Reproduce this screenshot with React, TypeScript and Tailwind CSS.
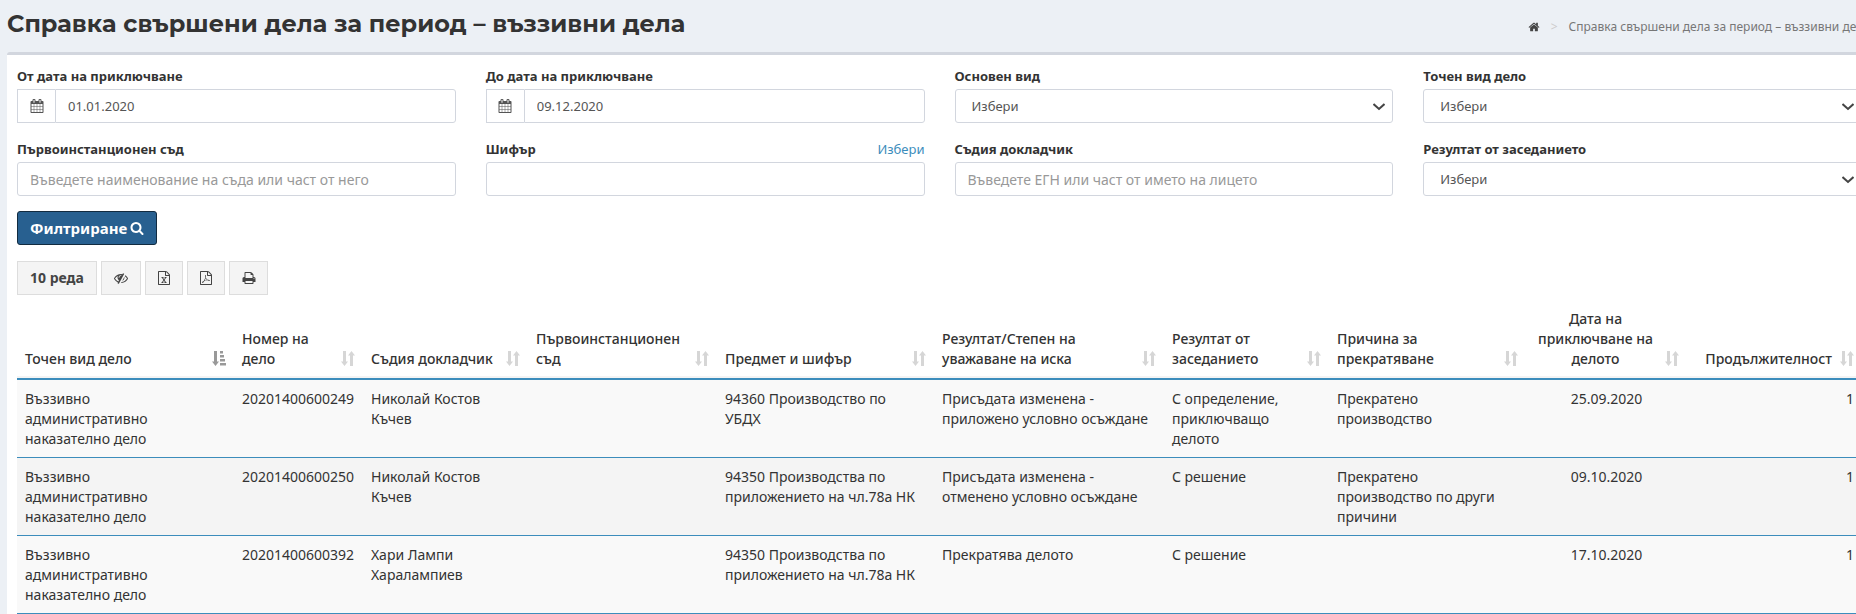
import React from "react";

const FILE =
  "M1596 380q28 28 48 76t20 88v1152q0 40-28 68t-68 28h-1344q-40 0-68-28t-28-68v-1600q0-40 28-68t68-28h896q40 0 88 20t76 48zm-444-244v376h376q-10-29-22-41l-313-313q-12-12-41-22zm384 1528v-1024h-416q-40 0-68-28t-28-68v-416h-768v1536h1280z";

const PATHS = {
  calendar:
    "M192 1664h288v-288h-288v288zm352 0h320v-288h-320v288zm-352-352h288v-320h-288v320zm352 0h320v-320h-320v320zm-352-384h288v-288h-288v288zm736 736h320v-288h-320v288zm-384-736h320v-288h-320v288zm768 736h288v-288h-288v288zm-384-352h320v-320h-320v320zm-352-864v-288q0-13-9.5-22.5t-22.5-9.5h-64q-13 0-22.5 9.5t-9.5 22.5v288q0 13 9.5 22.5t22.5 9.5h64q13 0 22.5-9.5t9.5-22.5zm736 864h288v-320h-288v320zm-384-384h320v-288h-320v288zm384 0h288v-288h-288v288zm32-480v-288q0-13-9.5-22.5t-22.5-9.5h-64q-13 0-22.5 9.5t-9.5 22.5v288q0 13 9.5 22.5t22.5 9.5h64q13 0 22.5-9.5t9.5-22.5zm384-64v1280q0 52-38 90t-90 38h-1408q-52 0-90-38t-38-90v-1280q0-52 38-90t90-38h128v-96q0-66 47-113t113-47h64q66 0 113 47t47 113v96h384v-96q0-66 47-113t113-47h64q66 0 113 47t47 113v96h128q52 0 90 38t38 90z",
  home: "M1472 992v480q0 26-19 45t-45 19h-384v-384h-256v384h-384q-26 0-45-19t-19-45v-480q0-1 .5-3t.5-3l575-474 575 474q1 2 1 6zm223-69l-62 74q-8 9-21 11h-3q-13 0-21-7l-692-577-692 577q-12 8-24 7-13-2-21-11l-62-74q-8-10-7-23.5t11-21.5l719-599q32-26 76-26t76 26l244 204v-195q0-14 9-23t23-9h192q14 0 23 9t9 23v408l219 182q10 8 11 21.5t-7 23.5z",
  search:
    "M1216 832q0-185-131.5-316.5t-316.5-131.5-316.5 131.5-131.5 316.5 131.5 316.5 316.5 131.5 316.5-131.5 131.5-316.5zm512 832q0 52-38 90t-90 38q-54 0-90-38l-343-342q-179 124-399 124-143 0-273.5-55.5t-225-150-150-225-55.5-273.5 55.5-273.5 150-225 225-150 273.5-55.5 273.5 55.5 225 150 150 225 55.5 273.5q0 220-124 399l343 343q37 37 37 90z",
  print:
    "M448 1536h896v-256h-896v256zm0-640h896v-384h-160q-40 0-68-28t-28-68v-160h-640v640zm1152 64q0-26-19-45t-45-19-45 19-19 45 19 45 45 19 45-19 19-45zm128 0v416q0 13-9.5 22.5t-22.5 9.5h-224v160q0 40-28 68t-68 28h-960q-40 0-68-28t-28-68v-160h-224q-13 0-22.5-9.5t-9.5-22.5v-416q0-79 56.5-135.5t135.5-56.5h64v-544q0-40 28-68t68-28h672q40 0 88 20t76 48l152 152q28 28 48 76t20 88v256h64q79 0 135.5 56.5t56.5 135.5z",
  eyeSlash:
    "M555 1335l78-141q-87-63-136-159t-49-203q0-121 61-225-229 117-381 353 167 258 427 375zm389-759q0-20-14-34t-34-14q-125 0-214.5 89.5t-89.5 214.5q0 20 14 34t34 14 34-14 14-34q0-86 61-147t147-61q20 0 34-14t14-34zm363-191q0 7-1 9-106 189-316 567t-315 566l-49 89q-10 16-28 16-12 0-134-70-16-10-16-28 0-12 44-87-143-65-263.5-173t-208.5-245q-20-31-20-69t20-69q153-235 380-371t496-136q89 0 180 17l54-97q10-16 28-16 5 0 18 6t31 15.5 33 18.5 31.5 18.5 19.5 11.5q16 10 16 27zm37 447q0 139-79 253.5t-209 164.5l280-502q8 45 8 84zm448 128q0 35-20 69-39 64-109 145-150 172-347.5 267t-419.5 95l74-132q212-18 392.5-137t301.5-307q-115-179-282-294l63-112q95 64 182.5 153t144.5 184q20 34 20 69z",
  excel:
    FILE +
    "m-979-234v106h281v-106h-75l103-161q5-7 10-16.5t7.5-13.5 3.5-4h2q1 4 5 10 2 4 4.5 7.5t6 8 6.5 8.5l107 161h-76v106h291v-106h-68l-192-273 195-282h67v-107h-279v107h74l-103 159q-4 7-10 16.5t-9 13.5l-2 3h-2q-1-4-5-10-6-11-17-23l-106-159h76v-107h-290v107h68l189 272-194 283h-68z",
  pdf:
    FILE +
    "m-514-593q33 26 84 56 59-7 117-7 147 0 177 49 16 22 2 52 0 1-1 2l-2 2v1q-6 38-71 38-48 0-115-20t-130-53q-221 24-392 83-153 262-242 262-15 0-28-7l-24-12q-1-1-6-5-10-10-6-36 9-40 56-91.5t132-96.5q14-9 23 6 2 2 2 4 52-85 107-197 68-136 104-262-24-82-30.5-159.5t6.5-127.5q11-40 42-40h22q23 0 35 15 18 21 9 68-2 6-4 8 1 3 1 8v30q-2 123-14 192 55 164 146 238zm-576 411q52-24 137-158-51 40-87.5 84t-49.5 74zm398-920q-15 42-2 132 1-7 7-44 0-3 7-43 1-4 4-8-1-1-1-2t-1-2q-1-22-13-36 0 1-1 2v2zm-124 661q135-54 284-81-2-1-13-9.5t-16-13.5q-76-67-127-176-27 86-83 197-30 56-45 83zm646-16q-24-24-140-24 76 28 124 28 14 0 18-1 0-1-2-3z",
};

function Icon({ name, className }: { name: keyof typeof PATHS; className: string }) {
  return (
    <svg viewBox="0 0 1792 1792" fill="currentColor" aria-hidden="true" className={className}>
      <path d={PATHS[name]} />
    </svg>
  );
}

function SortIcon({ active }: { active: boolean }) {
  return (
    <svg
      viewBox="0 0 14 15"
      fill="currentColor"
      aria-hidden="true"
      className={"absolute right-2 bottom-3 h-[15px] w-[14px] " + (active ? "text-[#999999]" : "text-[#d6d6d6]")}
    >
      <path d="M2 0h3v10.500h2L3.500 15 0 10.500h2z" />
      {active ? (
        <path d="M8 0h3v2.500H8zM8 4h4v2.500H8zM8 8h5v2.500H8zM8 12h6v2.500H8z" />
      ) : (
        <path d="M9 15h3V4.500h2L10.500 0 7 4.500h2z" />
      )}
    </svg>
  );
}

const labelClass = "text-[13px] leading-[22px] font-bold text-[#333333]";
const fieldClass =
  "h-[34px] w-full rounded-[3px] border border-[#d2d6de] bg-white px-3 text-sm text-[#555555] outline-none placeholder:text-[#999999]";

function DateField({ id, label, value }: { id: string; label: string; value: string }) {
  return (
    <div className="flex flex-col gap-0.5">
      <label htmlFor={id} className={labelClass}>{label}</label>
      <div className="flex">
        <span className="flex h-[34px] w-[38px] shrink-0 items-center justify-center border border-r-0 border-[#d2d6de] text-[#555555]">
          <Icon name="calendar" className="size-[14px]" />
        </span>
        <input
          id={id}
          defaultValue={value}
          className="h-[34px] min-w-0 flex-1 rounded-r-[3px] border border-[#d2d6de] bg-white px-3 text-[13px] text-[#555555] outline-none"
        />
      </div>
    </div>
  );
}

function TextField({ id, label, placeholder, link }: { id: string; label: string; placeholder?: string; link?: string }) {
  return (
    <div className="flex flex-col gap-0.5">
      <div className="flex h-[22px] items-center justify-between">
        <label htmlFor={id} className={labelClass}>{label}</label>
        {link && (
          <a href="#" className="text-[13px] leading-[22px] text-[#3c8dbc]">{link}</a>
        )}
      </div>
      <input id={id} placeholder={placeholder} className={fieldClass} />
    </div>
  );
}

function SelectField({ id, label }: { id: string; label: string }) {
  return (
    <div className="flex flex-col gap-0.5">
      <label htmlFor={id} className={labelClass}>{label}</label>
      <div className="relative">
        <select
          id={id}
          className="h-[34px] w-full appearance-none rounded-[3px] border border-[#d2d6de] bg-white px-4 pt-0.5 text-[13px] text-[#555555] outline-none"
        >
          <option>Избери</option>
        </select>
        <svg
          viewBox="0 0 12 8"
          fill="none"
          stroke="#444444"
          strokeWidth="2"
          aria-hidden="true"
          className="pointer-events-none absolute top-[14px] right-2 h-2 w-3"
        >
          <path d="M.500 1L6 6l5.500-5" />
        </svg>
      </div>
    </div>
  );
}

type Column = { title: string; width: string; align?: string };

const columns: Column[] = [
  { title: "Точен вид дело", width: "w-[217px]" },
  { title: "Номер на\nдело", width: "w-[129px]" },
  { title: "Съдия докладчик", width: "w-[165px]" },
  { title: "Първоинстанционен\nсъд", width: "w-[189px]" },
  { title: "Предмет и шифър", width: "w-[217px]" },
  { title: "Резултат/Степен на\nуважаване на иска", width: "w-[230px]" },
  { title: "Резултат от\nзаседанието", width: "w-[165px]" },
  { title: "Причина за\nпрекратяване", width: "w-[197px]" },
  { title: "Дата на\nприключване на\nделото", width: "w-[161px]", align: "text-center" },
  { title: "Продължителност", width: "w-[175px]", align: "text-right" },
];

const rows = [
  ["Въззивно\nадминистративно\nнаказателно дело", "20201400600249", "Николай Костов\nКъчев", "", "94360 Производство по\nУБДХ", "Присъдата изменена -\nприложено условно осъждане", "С определение,\nприключващо\nделото", "Прекратено\nпроизводство", "25.09.2020", "1"],
  ["Въззивно\nадминистративно\nнаказателно дело", "20201400600250", "Николай Костов\nКъчев", "", "94350 Производства по\nприложението на чл.78а НК", "Присъдата изменена -\nотменено условно осъждане", "С решение", "Прекратено\nпроизводство по други\nпричини", "09.10.2020", "1"],
  ["Въззивно\nадминистративно\nнаказателно дело", "20201400600392", "Хари Лампи\nХаралампиев", "", "94350 Производства по\nприложението на чл.78а НК", "Прекратява делото", "С решение", "", "17.10.2020", "1"],
];

const toolClass = "flex h-[34px] items-center justify-center border border-[#dddddd] bg-[#f4f4f4] px-3 text-[#444444]";

export default function App() {
  return (
    <div lang="bg" className="min-h-screen overflow-hidden bg-[#ecf0f5] font-['Noto_Sans',sans-serif] text-[#333333]">
      <div className="w-[calc(100%+16px)] pl-[7px]">
        <header className="flex h-[52px] items-center justify-between">
          <h1 lang="ru" className="pb-1 font-[Montserrat,Inter,sans-serif] text-[24px] leading-7 font-bold">
            Справка свършени дела за период – въззивни дела
          </h1>
          <nav aria-label="Път" className="flex items-center gap-[11px] pt-0.5 pr-0.5 text-xs leading-5 text-[#777777]">
            <a href="#" aria-label="Начало" className="text-[#444444]">
              <Icon name="home" className="size-3" />
            </a>
            <span className="text-[#cccccc]">&gt;</span>
            <span>Справка свършени дела за период – въззивни дела</span>
          </nav>
        </header>

        <main className="min-h-[562px] rounded-t-[3px] border-t-[3px] border-[#d2d6de] bg-white p-[10px]">
          <form onSubmit={(e) => e.preventDefault()}>
            <div className="grid grid-cols-4 gap-x-[30px] gap-y-[15px]">
              <DateField id="from" label="От дата на приключване" value="01.01.2020" />
              <DateField id="to" label="До дата на приключване" value="09.12.2020" />
              <SelectField id="kind" label="Основен вид" />
              <SelectField id="exact" label="Точен вид дело" />
              <TextField id="court" label="Първоинстанционен съд" placeholder="Въведете наименование на съда или част от него" />
              <TextField id="code" label="Шифър" link="Избери" />
              <TextField id="judge" label="Съдия докладчик" placeholder="Въведете ЕГН или част от името на лицето" />
              <SelectField id="result" label="Резултат от заседанието" />
            </div>
            <button
              type="submit"
              className="mt-[15px] flex h-[34px] items-center gap-[3px] rounded-[3px] border border-[#122b40] bg-[#286090] px-3 text-[15px] font-bold text-white"
            >
              Филтриране
              <Icon name="search" className="size-[14px]" />
            </button>
          </form>

          <div className="mt-4 flex gap-1">
            <button type="button" className={toolClass + " text-sm font-bold"}>10 реда</button>
            <button type="button" aria-label="Колони" className={toolClass}><Icon name="eyeSlash" className="size-[14px]" /></button>
            <button type="button" aria-label="Excel" className={toolClass}><Icon name="excel" className="-mx-px size-[14px]" /></button>
            <button type="button" aria-label="PDF" className={toolClass}><Icon name="pdf" className="-mx-px size-[14px]" /></button>
            <button type="button" aria-label="Печат" className={toolClass}><Icon name="print" className="-mr-px size-[14px]" /></button>
          </div>

          <table className="mt-[6px] w-full table-fixed border-collapse text-sm leading-5">
            <thead>
              <tr className="border-b-2 border-[#3c8dbc]">
                {columns.map((c, i) => (
                  <th
                    key={c.title}
                    className={"relative h-[78px] pr-[30px] pb-[9px] pl-2 align-bottom font-medium whitespace-pre-line shadow-[inset_0_-2px_0_#f4f4f4] " + c.width + " " + (c.align ?? "text-left")}
                  >
                    {c.title}
                    <SortIcon active={i === 0} />
                  </th>
                ))}
              </tr>
            </thead>
            <tbody>
              {rows.map((row) => (
                <tr key={row[1]} className="border-b border-[#3c8dbc] odd:bg-[#f9f9f9] even:bg-[#f4f4f4]">
                  {row.map((cell, i) => (
                    <td key={i} className={"px-2 pt-[9px] pb-2 align-top whitespace-pre-line " + (columns[i].align ?? "text-left")}>{cell}</td>
                  ))}
                </tr>
              ))}
            </tbody>
          </table>
        </main>
      </div>
    </div>
  );
}
